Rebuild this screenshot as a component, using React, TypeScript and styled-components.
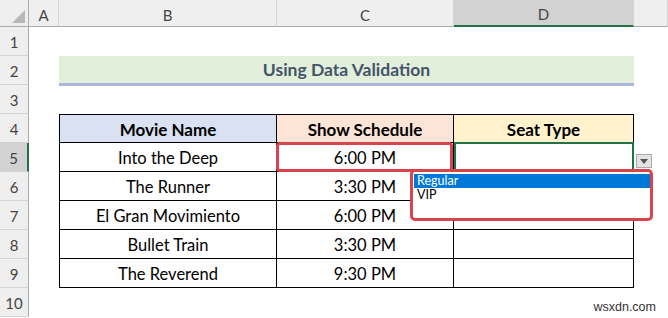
import styled, { createGlobalStyle } from "styled-components";

const Global = createGlobalStyle`
  html, body {
    margin: 0;
    padding: 0;
    background: #fff;
    overflow: hidden;
  }
`;

const Sheet = styled.div`
  position: relative;
  display: grid;
  grid-template-columns: 29px 30px 218px 177px 180px 34px;
  grid-template-rows: 27px repeat(10, 29px);
  width: 668px;
  height: 318px;
  overflow: hidden;
  background: #fff;
  font-family: Lato, "Liberation Sans", sans-serif;
`;

const ColHead = styled.div<{ $active?: boolean }>`
  position: relative;
  box-sizing: border-box;
  display: flex;
  align-items: center;
  justify-content: center;
  padding-top: 3px;
  background: ${(p) => (p.$active ? "#d2d2d2" : "#efefef")};
  border-right: 1px solid #d4d4d4;
  border-bottom: ${(p) => (p.$active ? "2px solid #217346" : "1px solid #ababab")};
  color: #444;
  font-size: 15px;
`;

const Corner = styled(ColHead)`
  border-right: 1px solid #ababab;
  &::after {
    content: "";
    position: absolute;
    right: 3px;
    bottom: 3px;
    width: 13px;
    height: 13px;
    background: #b7b7b7;
    clip-path: polygon(100% 0, 100% 100%, 0 100%);
  }
`;

const RowHead = styled.div<{ $active?: boolean }>`
  box-sizing: border-box;
  display: flex;
  align-items: center;
  justify-content: center;
  padding-top: 2px;
  background: ${(p) => (p.$active ? "#d2d2d2" : "#efefef")};
  border-bottom: 1px solid #d4d4d4;
  border-right: ${(p) => (p.$active ? "2px solid #217346" : "1px solid #ababab")};
  color: #444;
  font-size: 15px;
`;

const Blank = styled.div``;

const Title = styled.div`
  grid-column: 3 / 6;
  box-sizing: border-box;
  height: 30px;
  display: flex;
  align-items: center;
  justify-content: center;
  padding-bottom: 1px;
  background: #e2efda;
  border-bottom: 3px solid #a9b8da;
  color: #44546a;
  font-size: 17.5px;
  font-weight: 700;
`;

const Cell = styled.div<{ $bg?: string; $head?: boolean; $first?: boolean }>`
  position: relative;
  box-sizing: border-box;
  display: flex;
  align-items: center;
  justify-content: center;
  padding-top: 1px;
  background: ${(p) => p.$bg ?? "#fff"};
  border-right: 1px solid #000;
  border-bottom: 1px solid #000;
  border-top: ${(p) => (p.$head ? "1px solid #000" : "none")};
  border-left: ${(p) => (p.$first ? "1px solid #000" : "none")};
  color: #000;
  font-size: ${(p) => (p.$head ? "17px" : "16.5px")};
  font-weight: ${(p) => (p.$head ? 700 : 400)};
`;

const Marked = styled(Cell)`
  &::after {
    content: "";
    position: absolute;
    left: -1px;
    top: -1px;
    width: 177px;
    height: 30px;
    box-sizing: border-box;
    border: 3px solid #d9434b;
    border-radius: 4px;
  }
`;

const Selected = styled(Cell)`
  z-index: 2;
  &::before {
    content: "";
    position: absolute;
    left: 0;
    top: -1px;
    right: -1px;
    bottom: -1px;
    border: 2px solid #217346;
  }
`;

const ArrowButton = styled.div`
  position: absolute;
  left: 182px;
  top: 11px;
  width: 16px;
  height: 14px;
  box-sizing: border-box;
  display: flex;
  align-items: center;
  justify-content: center;
  background: #e3e3e3;
  border: 1px solid #a9a9a9;
`;

const Drop = styled.div`
  position: absolute;
  left: -44px;
  top: 26px;
  width: 243px;
  height: 52px;
  box-sizing: border-box;
  padding: 2px 0 0 1px;
  background: #fff;
  border: 3px solid #d9434b;
  border-radius: 5px;
  z-index: 3;
`;

const Option = styled.div<{ $selected?: boolean }>`
  height: 14px;
  line-height: 14px;
  padding-left: 3px;
  font-size: 12.5px;
  background: ${(p) => (p.$selected ? "#0078d7" : "transparent")};
  color: ${(p) => (p.$selected ? "#fff" : "#000")};
  text-align: left;
`;

const Watermark = styled.div`
  position: absolute;
  right: 12px;
  bottom: 4px;
  font-family: "Liberation Sans", Arial, sans-serif;
  font-size: 12.5px;
  color: #333;
`;

const movies: [string, string][] = [
  ["Into the Deep", "6:00 PM"],
  ["The Runner", "3:30 PM"],
  ["El Gran Movimiento", "6:00 PM"],
  ["Bullet Train", "3:30 PM"],
  ["The Reverend", "9:30 PM"],
];

function Arrow() {
  return (
    <svg width="8" height="5" viewBox="0 0 8 5">
      <path d="M0 0 H8 L4 5 Z" fill="#555" />
    </svg>
  );
}

export default function App() {
  return (
    <>
      <Global />
      <Sheet>
        <Corner />
        <ColHead>A</ColHead>
        <ColHead>B</ColHead>
        <ColHead>C</ColHead>
        <ColHead $active>D</ColHead>
        <ColHead />

        <RowHead>1</RowHead>
        <Blank />
        <Blank />
        <Blank />
        <Blank />
        <Blank />

        <RowHead>2</RowHead>
        <Blank />
        <Title>Using Data Validation</Title>
        <Blank />

        <RowHead>3</RowHead>
        <Blank />
        <Blank />
        <Blank />
        <Blank />
        <Blank />

        <RowHead>4</RowHead>
        <Blank />
        <Cell $head $first $bg="#d9e1f2">
          Movie Name
        </Cell>
        <Cell $head $bg="#fce4d6">
          Show Schedule
        </Cell>
        <Cell $head $bg="#fff2cc">
          Seat Type
        </Cell>
        <Blank />

        {movies.map(([name, time], i) => (
          <Row key={name} n={i + 5} name={name} time={time} first={i === 0} />
        ))}

        <RowHead>10</RowHead>
        <Blank />
        <Blank />
        <Blank />
        <Blank />
        <Blank />

        <Watermark>wsxdn.com</Watermark>
      </Sheet>
    </>
  );
}

function Row({ n, name, time, first }: { n: number; name: string; time: string; first: boolean }) {
  return (
    <>
      <RowHead $active={first}>{n}</RowHead>
      <Blank />
      <Cell $first>{name}</Cell>
      {first ? <Marked>{time}</Marked> : <Cell>{time}</Cell>}
      {first ? (
        <Selected>
          <ArrowButton>
            <Arrow />
          </ArrowButton>
          <Drop>
            <Option $selected>Regular</Option>
            <Option>VIP</Option>
          </Drop>
        </Selected>
      ) : (
        <Cell />
      )}
      <Blank />
    </>
  );
}
